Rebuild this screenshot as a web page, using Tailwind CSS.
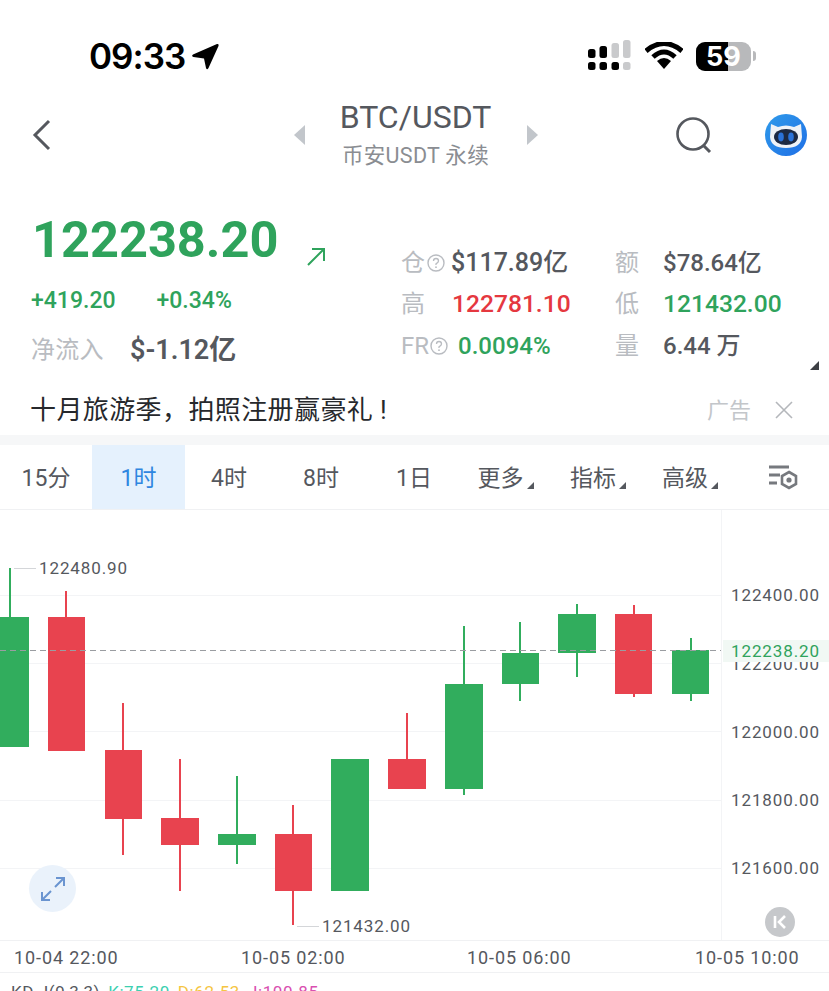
<!DOCTYPE html>
<html lang="zh">
<head>
<meta charset="utf-8">
<script src="https://cdn.jsdelivr.net/npm/@tailwindcss/browser@4"></script>
</head>
<body class="bg-white">
<div class="w-[829px] h-[991px] overflow-hidden flex flex-col bg-white text-[#55585e] font-[Roboto,'Noto_Sans_CJK_SC',sans-serif]">

  <!-- status bar -->
  <div class="h-[96px] shrink-0 flex items-start justify-between pt-[38px] pl-[89px] pr-[73px]">
    <div class="flex items-center gap-[6px] h-[36px]">
      <span class="text-[35px] leading-none font-semibold text-black font-[Inter,sans-serif] tracking-[-1px]">09:33</span>
      <svg width="28" height="28" viewBox="0 0 28 28"><path d="M26 2 Q28 1.5 27.5 4 L17.5 26 Q16 28.5 15 26 L13 16.5 L2.5 15 Q0 14 2 12.5 Z" fill="#000"/></svg>
    </div>
    <div class="flex items-center gap-[11px] h-[36px]">
      <svg width="43" height="30" viewBox="0 0 43 30" class="mt-[-2px]">
        <rect x="0" y="9" width="7.5" height="9" rx="2.5" fill="#000"/><rect x="11.5" y="6" width="7.5" height="12" rx="2.5" fill="#000"/><rect x="23.5" y="3" width="7.5" height="15" rx="2.5" fill="#c9cacc"/><rect x="35" y="0" width="7.5" height="18" rx="2.5" fill="#c9cacc"/>
        <rect x="0" y="22" width="7.5" height="8" rx="2.5" fill="#000"/><rect x="11.5" y="22" width="7.5" height="8" rx="2.5" fill="#000"/><rect x="23.5" y="22" width="7.5" height="8" rx="2.5" fill="#000"/><rect x="35" y="22" width="7.5" height="8" rx="2.5" fill="#c9cacc"/>
      </svg>
      <svg width="38" height="28" viewBox="0 0 38 28" class="ml-[3px]">
        <path d="M1 9 Q19 -6 37 9" fill="none" stroke="#000" stroke-width="5"/><path d="M8 15 Q19 5 30 15" fill="none" stroke="#000" stroke-width="5"/><path d="M12 19 Q19 13 26 19 L19 27 Z" fill="#000"/>
      </svg>
      <div class="flex items-center gap-[2px] ml-[2px]">
        <div class="relative w-[55px] h-[29px] rounded-[9px] overflow-hidden bg-[#b8b9bb] flex items-center justify-center">
          <div class="absolute left-0 top-0 bottom-0 w-[32px] bg-black"></div>
          <span class="relative text-[27px] font-bold leading-none text-white font-[Inter,sans-serif]">59</span>
        </div>
        <div class="w-[3px] h-[10px] rounded-r-full bg-[#b8b9bb]"></div>
      </div>
    </div>
  </div>

  <!-- nav -->
  <div class="h-[78px] shrink-0 flex items-center pl-[32px] pr-[21px]">
    <svg width="20" height="32" viewBox="0 0 20 32"><path d="M17 2 L3 16 L17 30" fill="none" stroke="#55585e" stroke-width="3"/></svg>
    <div class="flex-1 flex items-center justify-center gap-[21px] ml-[110px] mr-[6px]">
      <svg width="12" height="20" viewBox="0 0 12 20"><path d="M12 0 V20 L1 10 Z" fill="#c2c6cb"/></svg>
      <div class="flex flex-col items-center w-[180px] mt-[-1px]">
        <span class="text-[32px] leading-[38px] font-normal">BTC/USDT</span>
        <span class="text-[21.5px] leading-[30px] text-[#8a8d92] mt-[5px] tracking-[0.3px] whitespace-nowrap">币安USDT 永续</span>
      </div>
      <svg width="12" height="20" viewBox="0 0 12 20"><path d="M0 0 V20 L11 10 Z" fill="#c2c6cb"/></svg>
    </div>
    <svg width="38" height="38" viewBox="0 0 38 38" class="mr-[51px] mt-[1px]"><circle cx="18" cy="17" r="15.5" fill="none" stroke="#55585e" stroke-width="2.6"/><path d="M28 28 L35 35" stroke="#55585e" stroke-width="3"/></svg>
    <svg width="44" height="44" viewBox="0 0 44 44">
      <defs><linearGradient id="b" x1="0" y1="0" x2="1" y2="1"><stop offset="0" stop-color="#2f9bea"/><stop offset="1" stop-color="#1f6fe6"/></linearGradient></defs>
      <circle cx="22" cy="22" r="21" fill="url(#b)"/>
      <path d="M7 11 L14 14 Q22 11 30 14 L37 11 L38 24 Q37 35 22 35 Q7 35 6 24 Z" fill="#eef2f7"/>
      <ellipse cx="22" cy="24" rx="12" ry="8" fill="#1c2a44"/>
      <ellipse cx="17" cy="24" rx="2.8" ry="4.4" fill="#2a72d8"/><ellipse cx="27" cy="24" rx="2.8" ry="4.4" fill="#2a72d8"/>
    </svg>
  </div>

  <!-- quote -->
  <div class="h-[217px] shrink-0 relative flex pl-[31px]">
    <div class="w-[370px] shrink-0 flex flex-col">
      <div class="flex items-start h-[117px] pt-[47px]">
        <span class="text-[50.5px] leading-[38px] font-bold text-[#2fa35c] ml-[1px]">122238.20</span>
        <svg width="22" height="22" viewBox="0 0 22 22" class="ml-[27px] mt-[25px]"><path d="M3 19 L19 3 M7 3 H19 V15" fill="none" stroke="#2fa35c" stroke-width="2"/></svg>
      </div>
      <div class="flex items-center h-[24px] mt-[-2px] gap-[41px] text-[23px] font-medium text-[#2fa35c]">
        <span>+419.20</span><span>+0.34%</span>
      </div>
      <div class="flex items-center h-[36px] mt-[19px]">
        <span class="text-[24px] text-[#b9bcc1] w-[99px] tracking-[0.3px]">净流入</span>
        <span class="text-[27px] font-semibold">$-1.12亿</span>
      </div>
    </div>
    <div class="grid grid-cols-[214px_1fr] grid-rows-[42px_41px_41px] mt-[68px] h-[124px] items-center">
      <div class="flex items-center">
        <span class="text-[24px] text-[#b9bcc1] leading-none">仓</span>
        <svg width="18" height="18" viewBox="0 0 18 18" class="ml-[2px] mr-[6px]"><circle cx="9" cy="9" r="8" fill="none" stroke="#b9bcc1" stroke-width="1.4"/><path d="M6.5 7 Q6.5 4.5 9 4.5 Q11.5 4.5 11.5 7 Q11.5 8.5 9 9.8 V11" fill="none" stroke="#b9bcc1" stroke-width="1.3"/><circle cx="9" cy="13.2" r="0.9" fill="#b9bcc1"/></svg>
        <span class="text-[25px] font-medium">$117.89亿</span>
      </div>
      <div class="flex items-center">
        <span class="text-[24px] text-[#b9bcc1] leading-none w-[48px]">额</span>
        <span class="text-[24px] font-medium">$78.64亿</span>
      </div>
      <div class="flex items-center">
        <span class="text-[24px] text-[#b9bcc1] leading-none w-[51px]">高</span>
        <span class="text-[24.6px] font-medium text-[#e5383f]">122781.10</span>
      </div>
      <div class="flex items-center">
        <span class="text-[24px] text-[#b9bcc1] leading-none w-[48px]">低</span>
        <span class="text-[24.6px] font-medium text-[#2fa35c]">121432.00</span>
      </div>
      <div class="flex items-center">
        <span class="text-[24px] text-[#b9bcc1] leading-none">FR</span>
        <svg width="18" height="18" viewBox="0 0 18 18" class="ml-[1px] mr-[10px]"><circle cx="9" cy="9" r="8" fill="none" stroke="#b9bcc1" stroke-width="1.4"/><path d="M6.5 7 Q6.5 4.5 9 4.5 Q11.5 4.5 11.5 7 Q11.5 8.5 9 9.8 V11" fill="none" stroke="#b9bcc1" stroke-width="1.3"/><circle cx="9" cy="13.2" r="0.9" fill="#b9bcc1"/></svg>
        <span class="text-[24px] font-medium text-[#2fa35c]">0.0094%</span>
      </div>
      <div class="flex items-center">
        <span class="text-[24px] text-[#b9bcc1] leading-none w-[48px]">量</span>
        <span class="text-[24px] font-medium">6.44 万</span>
      </div>
    </div>
    <div class="absolute right-[10px] bottom-[21px] w-0 h-0 border-l-[9px] border-l-transparent border-b-[9px] border-b-[#3d3f44]"></div>
  </div>

  <!-- ad -->
  <div class="h-[44px] shrink-0 flex items-center pl-[30px] pr-[35px] pb-[6px]">
    <span class="flex-1 text-[26px] leading-none text-[#26282c] tracking-[0.4px]">十月旅游季，拍照注册赢豪礼 !</span>
    <span class="text-[22px] text-[#c3c6ca] mr-[23px]">广告</span>
    <svg width="20" height="20" viewBox="0 0 20 20"><path d="M2 2 L18 18 M18 2 L2 18" stroke="#b4b7bb" stroke-width="1.6"/></svg>
  </div>
  <div class="h-[10px] shrink-0 bg-[#f6f7f8]"></div>

  <!-- tabs -->
  <div class="h-[65px] shrink-0 flex items-stretch border-b border-[#f0f1f3] text-[23px] pt-[5px]">
    <div class="w-[92px] flex items-center justify-center">15分</div>
    <div class="w-[93px] flex items-center justify-center bg-[#e5f1fd] text-[#2f86e0] mt-[-5px] pt-[5px]">1时</div>
    <div class="w-[88px] flex items-center justify-center">4时</div>
    <div class="w-[96px] flex items-center justify-center">8时</div>
    <div class="w-[90px] flex items-center justify-center">1日</div>
    <div class="w-[93px] flex items-center justify-center relative pr-[10px]">更多<span class="absolute right-[18px] bottom-[20px] w-0 h-0 border-l-[7px] border-l-transparent border-b-[7px] border-b-[#55585e]"></span></div>
    <div class="w-[92px] flex items-center justify-center relative pr-[10px]">指标<span class="absolute right-[18px] bottom-[20px] w-0 h-0 border-l-[7px] border-l-transparent border-b-[7px] border-b-[#55585e]"></span></div>
    <div class="w-[92px] flex items-center justify-center relative pr-[10px]">高级<span class="absolute right-[18px] bottom-[20px] w-0 h-0 border-l-[7px] border-l-transparent border-b-[7px] border-b-[#55585e]"></span></div>
    <div class="flex-1 flex items-center justify-center mt-[-5px]">
      <svg width="30" height="26" viewBox="0 0 30 26"><path d="M1 3 H21 M1 11 H12 M1 19 H9" stroke="#76797e" stroke-width="3"/><path d="M21 8 L28 12 V20 L21 24 L14 20 V12 Z" fill="none" stroke="#76797e" stroke-width="2.6"/><circle cx="21" cy="16" r="2.6" fill="#76797e"/></svg>
    </div>
  </div>

  <!-- chart -->
  <div class="relative h-[430px] shrink-0 text-[17px] tracking-[0.9px] leading-none">
    <svg class="absolute inset-0" width="829" height="430" viewBox="0 510 829 430">
      <g stroke="#f3f4f6" stroke-width="1">
        <path d="M0 595.5H721M0 663.5H721M0 731.5H721M0 800.5H721M0 868.5H721"/>
        <path d="M721.5 510V940"/>
      </g>
      <path d="M14 568.5H36M297 926.5H319" stroke="#d4d6d9"/>
      <g fill="#31ad5d" stroke="#31ad5d">
        <path d="M10 568V617M237 776V864M464 626V795M520 622V701M577 604V677M691 638V701" stroke-width="2" fill="none"/>
        <g stroke="none">
          <rect x="-9" y="617" width="38" height="130"/><rect x="218" y="834" width="38" height="11"/><rect x="331" y="759" width="38" height="132"/><rect x="445" y="684" width="38" height="105"/><rect x="502" y="653" width="37" height="31"/><rect x="558" y="614" width="38" height="39"/><rect x="672" y="650" width="37" height="44"/>
        </g>
      </g>
      <g fill="#e8434f" stroke="#e8434f">
        <path d="M66 591V617M123 703V855M180 759V891M293 805V925M407 713V759M634 605V697" stroke-width="2" fill="none"/>
        <g stroke="none">
          <rect x="48" y="617" width="37" height="134"/><rect x="105" y="750" width="37" height="69"/><rect x="161" y="818" width="38" height="27"/><rect x="275" y="834" width="37" height="57"/><rect x="388" y="759" width="38" height="30"/><rect x="615" y="614" width="37" height="80"/>
        </g>
      </g>
      <path d="M0 650.5H721" stroke="#9a9da1" stroke-dasharray="6 4"/>
    </svg>

    <span class="absolute left-[39px] top-[50px]">122480.90</span>
    <span class="absolute left-[322px] top-[408px]">121432.00</span>

    <span class="absolute left-[731px] top-[77px]">122400.00</span>
    <span class="absolute left-[731px] top-[146px]">122200.00</span>
    <span class="absolute left-[723px] top-[130px] w-[106px] h-[22px] bg-[#f1f8f4] pl-[8px] flex items-center text-[#2fa35c]">122238.20</span>
    <span class="absolute left-[731px] top-[214px]">122000.00</span>
    <span class="absolute left-[731px] top-[282px]">121800.00</span>
    <span class="absolute left-[731px] top-[350px]">121600.00</span>

    <div class="absolute left-[29px] top-[355px] w-[47px] h-[47px] rounded-full bg-[#eaf2fb] flex items-center justify-center">
      <svg width="24" height="24" viewBox="0 0 24 24"><path d="M14 10 L23 1 M15 1 H23 V9 M10 14 L1 23 M1 15 V23 H9" fill="none" stroke="#6a94d0" stroke-width="2"/></svg>
    </div>
    <div class="absolute left-[765px] top-[397px] w-[30px] h-[30px] rounded-full bg-[#c6c8cb] flex items-center justify-center">
      <svg width="16" height="16" viewBox="0 0 16 16"><path d="M3 2 V14" stroke="#fff" stroke-width="2.6"/><path d="M13 2 L7 8 L13 14" fill="none" stroke="#fff" stroke-width="2.6"/></svg>
    </div>
  </div>

  <!-- time axis -->
  <div class="h-[33px] shrink-0 relative border-y border-[#f0f1f3] text-[18px] tracking-[0.9px]">
    <span class="absolute left-[14px] top-[3px]">10-04 22:00</span>
    <span class="absolute left-[241px] top-[3px]">10-05 02:00</span>
    <span class="absolute left-[467px] top-[3px]">10-05 06:00</span>
    <span class="absolute left-[695px] top-[3px]">10-05 10:00</span>
  </div>

  <!-- indicator row, clipped by the window -->
  <div class="flex items-center gap-[8px] pl-[11px] pt-[11px] text-[17px] leading-none tracking-[0.6px] whitespace-nowrap">
    <span>KD J(9,3,3)</span><span class="text-[#3ccfb0]">K:75.20</span><span class="text-[#f5c542]">D:62.53</span><span class="text-[#d94fb0]">J:100.85</span>
  </div>
</div>
</body>
</html>
